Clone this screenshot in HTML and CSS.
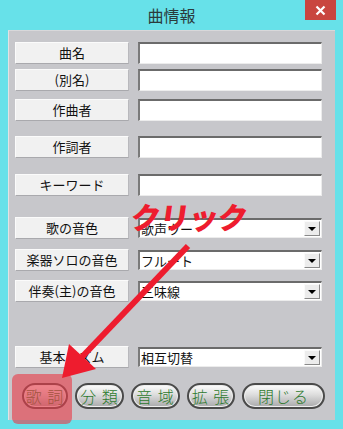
FILE: index.html
```html
<!DOCTYPE html>
<html lang="ja">
<head>
    <meta charset="UTF-8">
    <title>曲情報</title>
    <link rel="stylesheet" href="styles.css">
</head>
<body>
    <div class="window">
        <div class="titlebar">
            <span></span>
            <div class="title">曲情報</div>
            <div class="close">
                <svg width="11" height="11" viewBox="0 0 11 11"><path d="M1.5 1.5L9.5 9.5M9.5 1.5L1.5 9.5" stroke="#fff" stroke-width="2.2"/></svg>
            </div>
        </div>
        <div class="panel">
            <div class="row">
                <div class="label">曲名</div>
                <div class="field"></div>
            </div>
            <div class="row gap-5">
                <div class="label">(別名)</div>
                <div class="field"></div>
            </div>
            <div class="row gap-8">
                <div class="label">作曲者</div>
                <div class="field"></div>
            </div>
            <div class="row gap-15">
                <div class="label">作詞者</div>
                <div class="field"></div>
            </div>
            <div class="row gap-16">
                <div class="label">キーワード</div>
                <div class="field"></div>
            </div>
            <div class="row gap-21">
                <div class="label">歌の音色</div>
                <div class="select"><span>歌声ウー</span><i class="drop"></i></div>
            </div>
            <div class="row gap-10">
                <div class="label">楽器ソロの音色</div>
                <div class="select"><span>フルート</span><i class="drop"></i></div>
            </div>
            <div class="row gap-9">
                <div class="label">伴奏(主)の音色</div>
                <div class="select"><span>三味線</span><i class="drop"></i></div>
            </div>
            <div class="row gap-44">
                <div class="label">基本リズム</div>
                <div class="select"><span>相互切替</span><i class="drop"></i></div>
            </div>
            <div class="buttons">
                <button class="pill w46">歌 詞</button>
                <button class="pill w49">分 類</button>
                <button class="pill w49">音 域</button>
                <button class="pill w48">拡 張</button>
                <button class="pill w83">閉じる</button>
            </div>
        </div>

        <div class="highlight"></div>
        <div class="note">クリック</div>
        <svg class="arrow" width="343" height="429" viewBox="0 0 343 429">
            <line x1="188" y1="246" x2="80" y2="359" stroke="#ee1c2e" stroke-width="6"/>
            <polygon points="62,378 69,344 96,369" fill="#ee1c2e"/>
        </svg>
    </div>
</body>
</html>
```

FILE: styles.css
```css
*{
    padding: 0;
    margin: 0;
    box-sizing: border-box;
}
body{
    background: #67e1e9;
    font-family: "Noto Sans CJK JP", "Noto Sans", sans-serif;
}
.window{
    width: 343px;
    height: 429px;
    position: relative;
    background: #67e1e9;
    overflow: hidden;
}
.titlebar{
    height: 30px;
    display: grid;
    grid-template-columns: 1fr auto 1fr;
}
.titlebar .title{
    font-size: 16px;
    line-height: 30px;
    color: #2b3a3c;
}
.titlebar .close{
    justify-self: end;
    width: 31px;
    height: 20px;
    margin-right: 7px;
    background: #c9463f;
    display: flex;
    align-items: center;
    justify-content: center;
}
.panel{
    height: 390px;
    margin: 0 8px;
    background: #c7c7cb;
    border-left: 1px solid #e2e2e4;
    border-top: 1px solid #d8d8da;
    padding: 11px 0 0 6px;
}
.row{
    display: flex;
    align-items: center;
    height: 22px;
}
.gap-5{ margin-top: 5px; }
.gap-8{ margin-top: 8px; }
.gap-9{ margin-top: 9px; }
.gap-10{ margin-top: 10px; }
.gap-15{ margin-top: 15px; }
.gap-16{ margin-top: 16px; }
.gap-21{ margin-top: 21px; }
.gap-44{ margin-top: 44px; }
.label{
    width: 114px;
    height: 22px;
    background: #f1f1f1;
    border-top: 1px solid #fbfbfb;
    border-left: 1px solid #fbfbfb;
    border-bottom: 1px solid #a9a9ad;
    border-right: 1px solid #b9b9bd;
    font-size: 13px;
    line-height: 20px;
    text-align: center;
    color: #111;
}
.field{
    width: 184px;
    height: 22px;
    margin-left: 9px;
    background: #fff;
    border-top: 2px solid #6b6b6b;
    border-left: 2px solid #7a7a7a;
    border-bottom: 1px solid #ececec;
    border-right: 1px solid #ececec;
}
.select{
    width: 184px;
    height: 20px;
    margin-left: 9px;
    background: #fff;
    border-top: 2px solid #6b6b6b;
    border-left: 2px solid #7a7a7a;
    border-bottom: 1px solid #ececec;
    border-right: 1px solid #ececec;
    display: flex;
    align-items: center;
    justify-content: space-between;
    font-size: 13px;
    color: #111;
}
.select span{
    padding-left: 1px;
    line-height: 17px;
}
.select .drop{
    width: 16px;
    height: 15px;
    margin-right: 1px;
    background: #ececec;
    border-top: 1px solid #fafafa;
    border-left: 1px solid #fafafa;
    border-bottom: 1px solid #8a8a8a;
    border-right: 1px solid #8a8a8a;
    display: flex;
    align-items: center;
    justify-content: center;
}
.select .drop::after{
    content: "";
    border-left: 4px solid transparent;
    border-right: 4px solid transparent;
    border-top: 4px solid #000;
}
.buttons{
    display: flex;
    gap: 7px;
    margin-top: 15px;
    padding-left: 7px;
}
.pill{
    height: 26px;
    border: 2px solid #4a4a4a;
    border-radius: 13px;
    background: linear-gradient(#fdfdfd, #dcdcdc 45%, #a9a9ab 100%);
    box-shadow: inset 0 0 0 1px #eee;
    font-family: "Noto Sans CJK JP", sans-serif;
    font-size: 16px;
    font-weight: 300;
    line-height: 20px;
    letter-spacing: 1px;
    color: #2e7a2e;
    white-space: nowrap;
}
.w46{ width: 46px; }
.w48{ width: 48px; }
.w49{ width: 49px; }
.w83{ width: 83px; }
.highlight{
    position: absolute;
    left: 12px;
    top: 374px;
    width: 60px;
    height: 50px;
    border-radius: 6px;
    background: rgba(232, 60, 72, 0.62);
}
.note{
    position: absolute;
    left: 131px;
    top: 194px;
    font-size: 30px;
    font-weight: 900;
    letter-spacing: -1px;
    color: #ee1c2e;
    transform: skewX(-8deg);
}
.arrow{
    position: absolute;
    left: 0;
    top: 0;
}
```
